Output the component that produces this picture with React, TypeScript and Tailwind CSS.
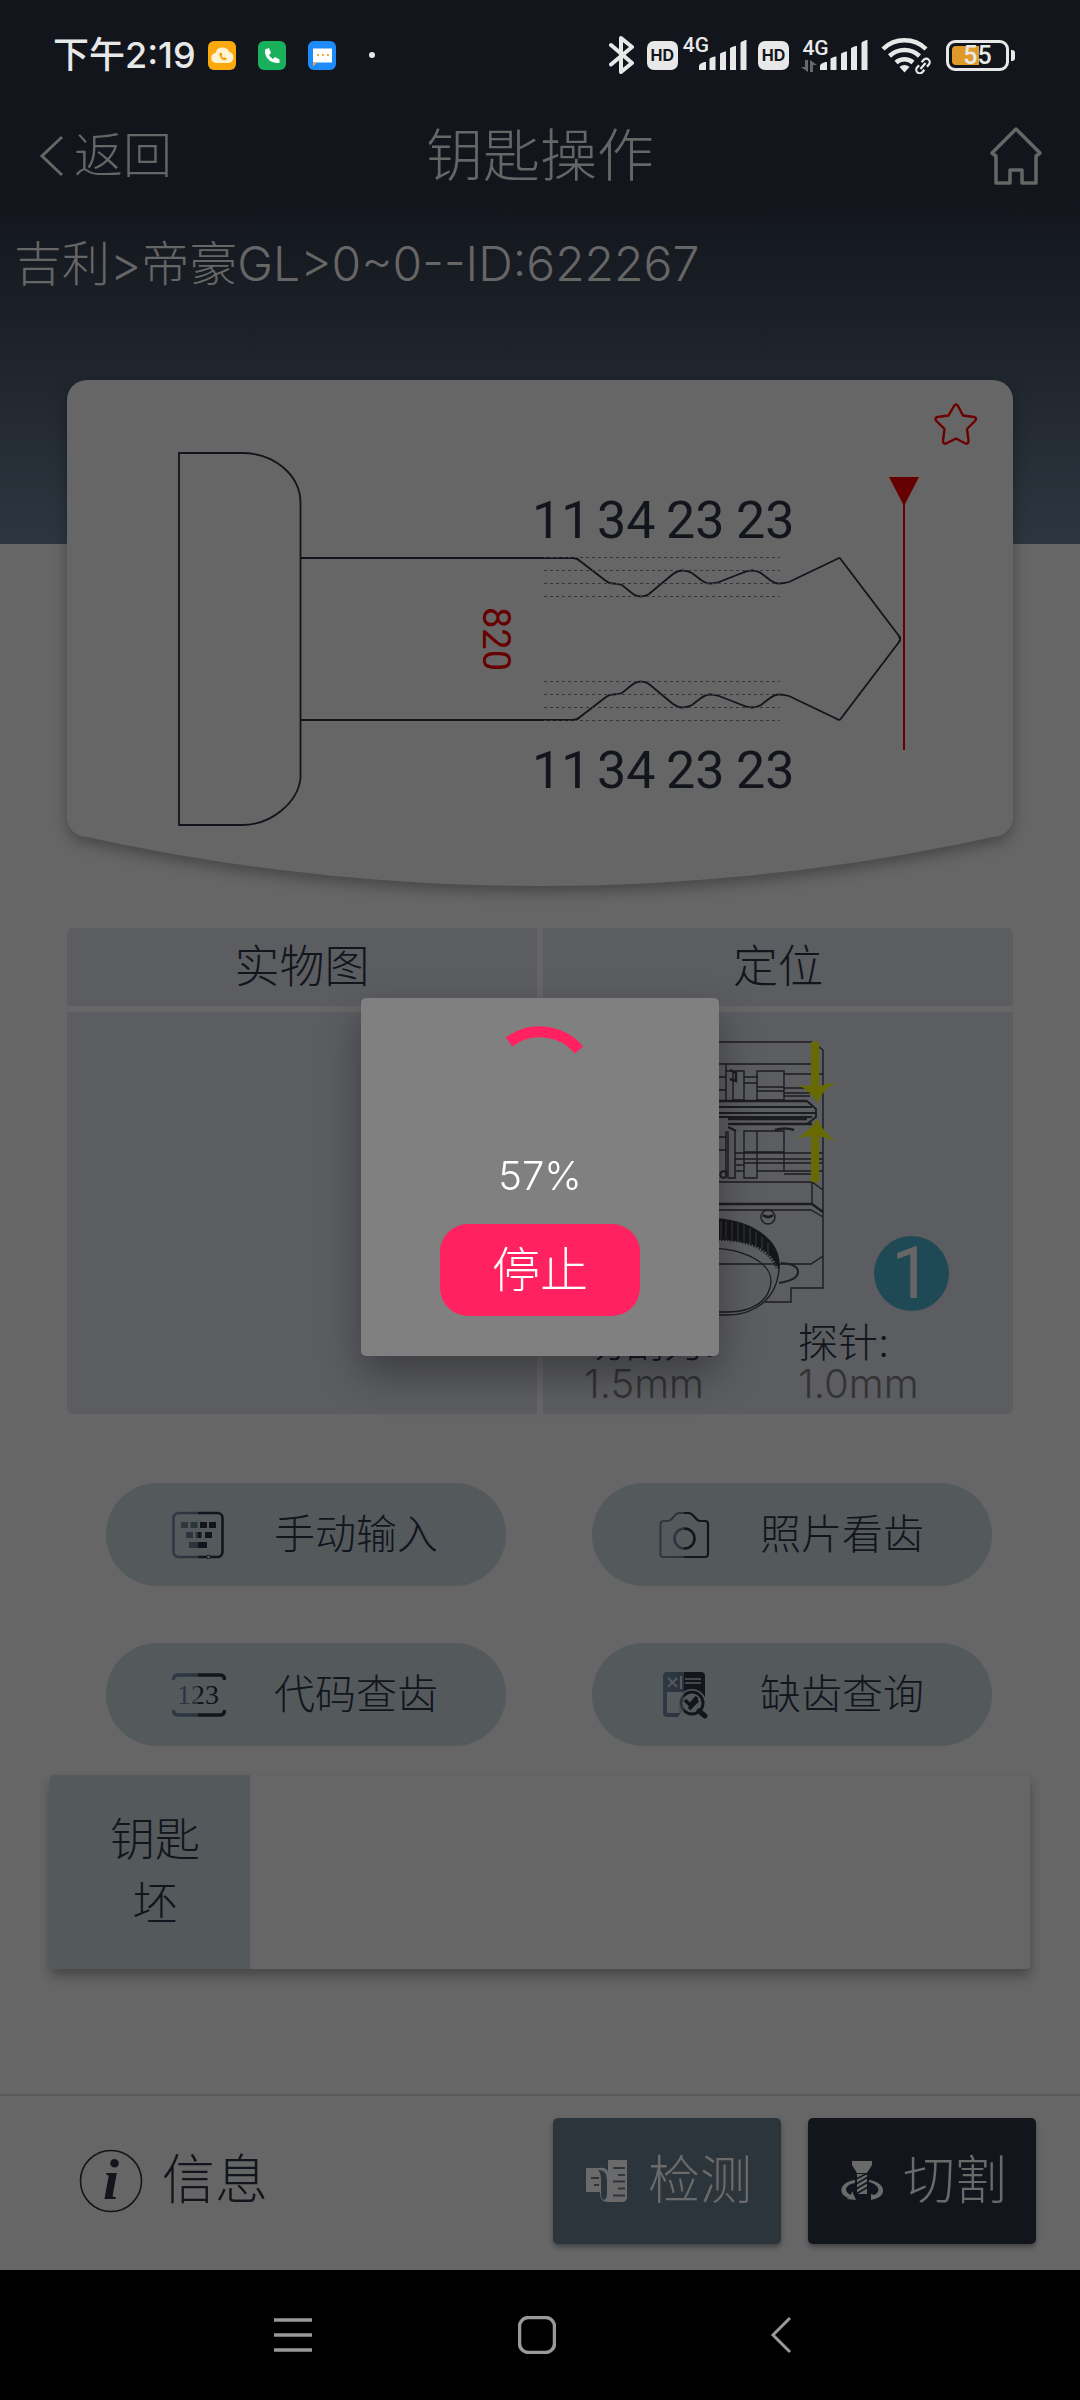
import type { ReactNode } from 'react';

const teethCodes = [
  { x: 532, code: '11' },
  { x: 597, code: '34' },
  { x: 666, code: '23' },
  { x: 736, code: '23' },
];

function ToothCodes({ baseline }: { baseline: number }) {
  return (
    <text y={baseline} fontSize="52" fill="#12151c" className="font-['Roboto',sans-serif] font-normal">
      {teethCodes.map((t) => (
        <tspan key={t.x} x={t.x}>
          {t.code}{' '}
        </tspan>
      ))}
    </text>
  );
}

function SignalBars() {
  return (
    <svg width="48" height="30" viewBox="0 0 48 30" fill="#e8e8e8" aria-hidden="true">
      <path d="M0 26c0-2 4-4 7-4v8H0z" />
      <path d="M10.500 19c0-1 4-2.500 6-2.500V30h-6z" />
      <path d="M21 14c0-1 4-2.500 6-2.500V30h-6z" />
      <path d="M31 8.500c0-1 4-2.500 6-2.500V30h-6z" />
      <path d="M41.500 3c0-1 4-3 6-3v30h-6z" />
    </svg>
  );
}

function HdBadge() {
  return (
    <span className="flex h-[29px] w-[31px] items-center justify-center rounded-[7px] bg-[#e8e8e8] font-['Inter',sans-serif] text-[16px] font-bold leading-none text-[#12151c]">
      HD
    </span>
  );
}

function StatusBar() {
  return (
    <div className="flex h-[110px] items-center justify-between pl-[53px] pr-[65px] text-[#e8e8e8]">
      <div className="flex items-center">
        <span className="w-[155px] whitespace-nowrap font-['Inter','Noto_Sans_CJK_SC',sans-serif] text-[36px] font-medium leading-none">
          下午2:19
        </span>
        <svg width="28" height="29" viewBox="0 0 28 29" aria-hidden="true">
          <rect width="28" height="29" rx="6" fill="#fba90c" />
          <path d="M8 22a5 5 0 0 1-.6-9.900 7.400 7.400 0 0 1 14-1A5.600 5.600 0 0 1 20.500 22z" fill="#fff3d6" />
          <path d="M11.500 12l2-.6 1 2.600-1 1.200a5 5 0 0 0 2.200 1.800l1.200-.8 2.100 1.400c-.4 1.600-1.800 2-3.400 1.500-2.600-.9-4.500-3.700-4.100-7.100z" fill="#f59e0b" />
        </svg>
        <svg className="ml-[22px]" width="28" height="29" viewBox="0 0 28 29" aria-hidden="true">
          <rect width="28" height="29" rx="6" fill="#19b05c" />
          <path d="M7 8.500l4-1.500 2 5-2 2a10 10 0 0 0 4 4l2-2 4.500 2.500v3.500c-8 1-15.500-5-14.500-13.500z" fill="#fff" />
        </svg>
        <svg className="ml-[22px]" width="28" height="29" viewBox="0 0 28 29" aria-hidden="true">
          <rect width="28" height="29" rx="6" fill="#1e8bfa" />
          <path d="M5 7.500h19v14H5z" fill="#fff" />
          <path d="M5 21.500h4L5 25.500z" fill="#f0a93c" />
          <path d="M9 14h2m3 0h2m3 0h2" stroke="#f0a93c" strokeWidth="2" />
        </svg>
        <span className="ml-[33px] size-[6px] rounded-full bg-[#e8e8e8]" />
      </div>
      <div className="flex items-center">
        <svg width="26" height="40" viewBox="0 0 26 40" fill="none" stroke="#e8e8e8" strokeWidth="4" strokeLinejoin="round" strokeLinecap="round" aria-hidden="true">
          <path d="M2 10l21 18-11 9V3l11 9L2 29.500" />
        </svg>
        <span className="ml-[12px]">
          <HdBadge />
        </span>
        <span className="ml-[5px] self-start font-['Roboto',sans-serif] text-[21px] font-medium leading-none">4G</span>
        <span className="-ml-[10px]">
          <SignalBars />
        </span>
        <span className="ml-[11px]">
          <HdBadge />
        </span>
        <span className="ml-[12px] flex flex-col items-center">
          <span className="font-['Roboto',sans-serif] text-[21px] font-medium leading-none">4G</span>
          <svg width="16" height="14" viewBox="0 0 16 14" fill="#666a6e" className="mr-[13px]" aria-hidden="true">
            <path d="M4 1h3v12L0 8h4zM9 1l7 5h-4v7H9z" />
          </svg>
        </span>
        <span className="-ml-[10px]">
          <SignalBars />
        </span>
        <svg className="ml-[13px]" width="52" height="38" viewBox="0 0 52 38" fill="none" stroke="#e8e8e8" aria-hidden="true">
          <path d="M2 13a31 31 0 0 1 43 0M8.500 20a22 22 0 0 1 30 0M15 26.500a13 13 0 0 1 17 0" strokeWidth="4.500" />
          <path d="M18.500 31a7 7 0 0 1 10 0l-5 5.500z" fill="#e8e8e8" stroke="none" />
          <g strokeWidth="2.200" transform="translate(42 30) rotate(-50)">
            <path d="M-2-3.500h-3a3.500 3.500 0 0 0 0 7h3m4-7h3a3.500 3.500 0 0 1 0 7H2M-4 0h8" />
          </g>
        </svg>
        <div className="relative ml-[13px] flex h-[31px] w-[63px] items-center justify-center rounded-[9px] border-[3px] border-[#e8e8e8]">
          <span className="absolute left-[3px] h-[19px] w-[27px] rounded-l-[4px] bg-[#e09a28]" />
          <span className="relative font-['Roboto',sans-serif] text-[25px] font-medium leading-none">55</span>
        </div>
        <span className="ml-[2px] h-[11px] w-[4px] rounded-r-[3px] bg-[#e8e8e8]" />
      </div>
    </div>
  );
}

function KeyDrawing() {
  const upper =
    'M301 558H573Q577 558 580 561L606 581Q609 583.500 613 583.500T622 585L633 594Q637 596.500 641 596.500T649 594L673 574Q678 570.500 682.500 570.500T692 573L701 580Q706 583.500 710 583.500T719 582L742 573Q747 570.500 752 570.500T761 573L770 580Q775 583.500 779 583.500T789 582L837 559Q839.500 557 841 559.500L899 636Q901 639 899 642';
  return (
    <svg viewBox="67 380 946 506" className="relative block w-full" role="img" aria-label="钥匙齿形图">
      <g fill="none" stroke="#12151c" strokeWidth="1.800">
        <path d="M179 453H242C274 453 300.500 475 300.500 503V778C298 802 272 825 242 825H179Z" />
        <path d={upper} />
        <path d={upper} transform="matrix(1 0 0 -1 0 1278)" />
      </g>
      <path
        d="M544 557.500H780M544 570.500H780M544 583.500H780M544 596.500H780M544 681.500H780M544 694.500H780M544 707.500H780M544 720.500H780"
        stroke="#34363a"
        strokeWidth="1"
        strokeDasharray="3 3"
      />
      <ToothCodes baseline={538} />
      <ToothCodes baseline={788} />
      <text transform="translate(483 607) rotate(90)" fontSize="38" fill="#660000" className="font-['Roboto',sans-serif] font-normal">
        820
      </text>
      <path d="M904 500V750" stroke="#660000" strokeWidth="2" />
      <path d="M889 477h30l-15 29z" fill="#660000" />
    </svg>
  );
}

function ClampDrawing() {
  return (
    <svg width="280" height="286" viewBox="560 1036 280 286" fill="none" stroke="#1c1d20" strokeWidth="1.400" role="img" aria-label="夹具定位图">
      <path d="M600 1042H812L823 1050V1288H791V1302H765M600 1064H812M600 1182H812L823 1190M812 1182V1204M600 1210H811L823 1217M600 1264H811L823 1256" />
      <path d="M600 1204H812L823 1212" strokeWidth="2.400" />
      <path d="M726 1064V1100M726 1131V1175M733 1071V1100H744V1071H726M744 1077H758M757 1071h27v29h-27zM744 1083H757M757 1087H784M757 1091H784M700 1077H726M700 1090H726M784 1074H823M784 1088H810M784 1093H810M784 1096H810" />
      <path d="M728 1131v47h7v-47M744 1131v47h13v-47zM757 1131h27v40h-27zM700 1137H726M700 1150H726M735 1159H744M735 1165H744M744 1152H784M735 1153H823M744 1159H823M744 1163H823M784 1171H823M757 1171H784M784 1174H812M735 1171H744" />
      <path d="M600 1101H807L816 1109V1117L807 1124H728M600 1107H812M600 1113H816M600 1117H812" strokeWidth="1.800" />
      <path d="M600 1101H807M728 1119H807M730 1124H812M730 1070l6 3v8l-6-2M728 1127l8 4M775 1130q10-3 19 0" strokeWidth="2.400" />
      <circle cx="723.500" cy="1174.500" r="3.300" strokeWidth="2" />
      <circle cx="768" cy="1217" r="7" />
      <path d="M763 1215q5 4 10 0" strokeWidth="2.800" />
      <path d="M781 1263q17 1 17 9t-19 11" strokeWidth="2" />
      <path d="M700 1219C750 1216 782 1240 779 1270C776 1300 754 1315 727 1315H700" />
      <path d="M700 1249C740 1245 771 1262 771 1281C770 1300 754 1312 727 1312H700" />
      <path d="M700 1219C750 1216 782 1240 779 1270C772 1250 752 1237 700 1240Z" fill="#141517" stroke="none" />
      <path d="M721 1221v18M726 1221v18M732 1222v18M738 1223v18M744 1225v16M750 1228v16M756 1232v15M762 1237v14M768 1243v13" stroke="#3b3c40" strokeWidth="1" />
      <path d="M700 1239.500C745 1237 768 1247 777 1268" strokeWidth="3" strokeDasharray="1.500 1.500" />
      <g fill="#666a00" stroke="none">
        <path d="M811 1042h8v44l17-4q-12 7-19 21q-8-14-20-18l14 1z" />
        <path d="M811 1182h8v-46l17 5q-12-8-19-22q-8 13-20 19l14-2z" />
      </g>
    </svg>
  );
}

function TwoToneGradient({ id }: { id: string }) {
  return (
    <defs>
      <linearGradient id={id} gradientUnits="userSpaceOnUse" x1="0" y1="0" x2="52" y2="0">
        <stop offset="0" stopColor="#2f3a44" />
        <stop offset="0.490" stopColor="#2b333d" />
        <stop offset="0.510" stopColor="#12151c" />
        <stop offset="1" stopColor="#12151c" />
      </linearGradient>
    </defs>
  );
}

function KeypadIcon() {
  return (
    <svg width="52" height="48" viewBox="0 0 52 48" aria-hidden="true">
      <TwoToneGradient id="keypad-tone" />
      <rect x="1.500" y="2" width="49" height="44" rx="5" fill="none" stroke="url(#keypad-tone)" strokeWidth="2.600" />
      <path d="M9 11h7v6H9zM18.500 11h7v6h-7zM28 11h7v6h-7zM37 11h7v6h-7zM14 21h7v6h-7zM23.500 21h6v6h-6zM33 21h7v6h-7zM17 31h18v6H17z" fill="url(#keypad-tone)" />
      <circle cx="36.500" cy="46" r="2" fill="#54595c" stroke="#12151c" />
    </svg>
  );
}

function CameraIcon() {
  return (
    <svg width="52" height="48" viewBox="0 0 52 48" fill="none" stroke="url(#camera-tone)" aria-hidden="true">
      <TwoToneGradient id="camera-tone" />
      <path d="M5 46Q2.500 46 2.500 43V13Q2.500 10 6 10H10C15 10 15 3 21 2H31C37 3 37 10 42 10H47Q50 10 50 13V43Q50 46 47 46Z" strokeWidth="2.200" />
      <circle cx="26.500" cy="27.500" r="10" strokeWidth="2.600" />
    </svg>
  );
}

function CodeIcon() {
  return (
    <svg width="54" height="48" viewBox="0 0 54 48" aria-hidden="true">
      <TwoToneGradient id="code-tone" />
      <path d="M1.500 9Q1.500 4 6 4H48Q52.500 4 52.500 9M1.500 39Q1.500 44 6 44H48Q52.500 44 52.500 39" fill="none" stroke="url(#code-tone)" strokeWidth="3.400" />
      <text x="5" y="33" fontSize="28" fill="url(#code-tone)" className="font-['Liberation_Serif',serif] font-normal">
        123
      </text>
    </svg>
  );
}

function InspectIcon() {
  return (
    <svg width="52" height="48" viewBox="0 0 52 48" aria-hidden="true">
      <TwoToneGradient id="inspect-tone" />
      <path d="M5 5Q5 1 9 1H43Q47 1 47 5V28H30L20 46H9Q5 46 5 42Z" fill="url(#inspect-tone)" />
      <path d="M9 21H24V25L20 33L22 42H9ZM27 18H47V30H27Z" fill="#54595c" />
      <path d="M27 16H47V26H44L40 20H27z" fill="#12151c" />
      <path d="M10 7l9 9m0-9l-9 9M23 5v13" stroke="#54595c" strokeWidth="2" />
      <path d="M27 8H43M27 12H43" stroke="#54595c" strokeWidth="1.400" />
      <circle cx="34" cy="32" r="14" fill="#54595c" />
      <circle cx="34" cy="32" r="11" fill="none" stroke="url(#inspect-tone)" strokeWidth="3" />
      <path d="M41 40l6 5" stroke="#12151c" strokeWidth="5" strokeLinecap="round" />
      <path d="M27 29l5 5 7-8M31 38l9-9" stroke="#12151c" strokeWidth="3.500" fill="none" />
    </svg>
  );
}

function PillButton({ icon, label }: { icon: ReactNode; label: string }) {
  return (
    <button
      type="button"
      className="flex h-[103px] max-w-[400px] flex-1 items-center rounded-full bg-[#54595c] pl-[66px] text-[#12151c]"
    >
      <span className="w-[102px]">{icon}</span>
      <span className="whitespace-nowrap text-[41px] leading-none">{label}</span>
    </button>
  );
}

function ActionButton({ icon, label, className }: { icon: ReactNode; label: string; className: string }) {
  return (
    <button
      type="button"
      className={`flex h-[126px] w-[228px] items-center justify-center gap-5 rounded-[5px] pl-1 text-[52px] leading-none text-[#6a6a6a] shadow-[0_3px_5px_rgba(0,0,0,0.35)] ${className}`}
    >
      {icon}
      {label}
    </button>
  );
}

function ProgressDialog() {
  return (
    <div className="fixed inset-0 flex items-center justify-center pb-[46px]">
      <div
        role="dialog"
        aria-label="进度"
        className="flex h-[358px] w-[358px] flex-col items-center rounded-[5px] bg-[#808080] pt-[28px] text-white shadow-[0_18px_40px_rgba(0,0,0,0.35)]"
      >
        <svg width="114" height="114" viewBox="0 0 114 114" fill="none" aria-hidden="true">
          <path d="M26 16A51.500 51.500 0 0 1 96 24" stroke="#ff2160" strokeWidth="11" />
        </svg>
        <p className="mt-[12px] text-[40px] leading-[48px]">57%</p>
        <button
          type="button"
          className="mt-[24px] h-[92px] w-[200px] rounded-[28px] bg-[#ff2160] text-[48px] leading-none"
        >
          停止
        </button>
      </div>
    </div>
  );
}

export default function App() {
  return (
    <div className="flex min-h-screen flex-col bg-[#666666] font-['Inter','Noto_Sans_CJK_SC',sans-serif] font-light">
      <header className="h-[544px] bg-[linear-gradient(to_bottom,#12151c_200px,#2d363f_544px)] text-[#666666]">
        <StatusBar />
        <div className="grid grid-cols-3 items-center px-[38px] pt-[14px]">
          <button type="button" className="flex items-center gap-[10px] text-[49px] leading-[64px]">
            <svg width="26" height="42" viewBox="0 0 26 42" fill="none" stroke="#666666" strokeWidth="3" aria-hidden="true">
              <path d="M24 2L4 21l20 19" />
            </svg>
            返回
          </button>
          <h1 className="text-center text-[57px] leading-[64px]">钥匙操作</h1>
          <button type="button" aria-label="主页" className="justify-self-end">
            <svg width="52" height="60" viewBox="0 0 52 60" fill="none" stroke="#666666" strokeWidth="3.500" strokeLinejoin="round" aria-hidden="true">
              <path d="M26 3L2 27l4 3V57H20V44H32V57H46V30l4-3z" />
            </svg>
          </button>
        </div>
        <p className="px-[14px] pt-[44px] text-[48px] leading-[64px]">吉利&gt;帝豪GL&gt;0~0--ID:622267</p>
      </header>

      <main className="flex-1">
        <section className="relative mx-[67px] -mt-[164px]">
          <div className="absolute inset-0 flex flex-col drop-shadow-[0_6px_7px_rgba(0,0,0,0.3)]">
            <div className="flex-1 rounded-[20px] bg-[#666666]" />
            <div className="mx-[18px] -mt-px h-[50px] bg-[#666666] [clip-path:ellipse(236%_4350%_at_50%_-4250%)]" />
          </div>
          <KeyDrawing />
          <button type="button" aria-label="收藏" className="absolute right-[35px] top-[22px]">
            <svg width="44" height="44" viewBox="0 0 44 44" fill="none" stroke="#6b0000" strokeWidth="2.400" strokeLinejoin="round" aria-hidden="true">
              <path d="M20 4q2-3 4 0l5 9.500 11 1.500q3.500 1 1 4l-8 8 1.500 11.500q0 4-3 3L22 36.500 12 41.500q-3 1-3-3L10.500 27l-8-8q-2.500-3 1-4L14.500 13.500z" />
            </svg>
          </button>
        </section>

        <section className="mx-[67px] mt-[42px] grid grid-cols-2 gap-[6px] text-[#12151c]">
          <h2 className="rounded-tl-[6px] bg-[#5c5d61] text-center text-[45px] leading-[78px]">实物图</h2>
          <h2 className="rounded-tr-[6px] bg-[#5c5d61] text-center text-[45px] leading-[78px]">定位</h2>
          <div className="rounded-bl-[6px] bg-[#5c5d61]" />
          <div className="h-[402px] rounded-br-[6px] bg-[#5c5d61] pl-[17px] pt-[24px]">
            <div className="flex items-end gap-[34px]">
              <ClampDrawing />
              <span className="mb-[11px] flex size-[75px] items-center justify-center rounded-full bg-[#1f4a55] font-['Roboto',sans-serif] text-[72px] font-normal leading-none text-[#666666]">
                1
              </span>
            </div>
            <dl className="flex pl-[24px] text-[40px] leading-[41px]">
              <div className="w-[214px]">
                <dt>切割刀:</dt>
                <dd className="text-[#333333]">1.5mm</dd>
              </div>
              <div>
                <dt>探针:</dt>
                <dd className="text-[#333333]">1.0mm</dd>
              </div>
            </dl>
          </div>
        </section>

        <section className="mt-[69px] flex flex-col gap-[57px] pl-[106px] pr-[88px]">
          <div className="flex justify-between gap-[86px]">
            <PillButton icon={<KeypadIcon />} label="手动输入" />
            <PillButton icon={<CameraIcon />} label="照片看齿" />
          </div>
          <div className="flex justify-between gap-[86px]">
            <PillButton icon={<CodeIcon />} label="代码查齿" />
            <PillButton icon={<InspectIcon />} label="缺齿查询" />
          </div>
        </section>

        <section className="mx-[50px] mt-[29px] flex h-[194px] overflow-hidden rounded-[4px] bg-[#666666] shadow-[0_7px_12px_rgba(0,0,0,0.3)]">
          <h2 className="flex w-[200px] items-center justify-center bg-[#54595c] pl-[60px] pr-[50px] text-center text-[45px] leading-[64px] text-[#12151c]">
            钥匙坯
          </h2>
        </section>
      </main>

      <footer className="flex h-[176px] items-center justify-between border-t-2 border-[#595959] pb-[5px] pl-[79px] pr-[44px]">
        <button type="button" className="flex items-center gap-[19px] text-[53px] leading-none text-[#12151c]">
          <svg width="64" height="64" viewBox="0 0 64 64" className="overflow-visible" aria-hidden="true">
            <circle cx="32" cy="32" r="30.500" fill="none" stroke="#12151c" strokeWidth="1.600" />
            <text x="32" y="50" textAnchor="middle" fontSize="58" fill="#12151c" className="font-['Liberation_Serif',serif] font-bold italic">
              i
            </text>
          </svg>
          信息
        </button>
        <div className="flex gap-[27px]">
          <ActionButton
            className="bg-[#2d353c]"
            label="检测"
            icon={
              <svg width="42" height="44" viewBox="0 0 42 44" aria-hidden="true">
                <path d="M0 9H12Q22 8 22 14V1H41V38Q41 43 36 43H22Q14 43 14 34V33H0Z" fill="#6a6a6a" />
                <path d="M12 11Q21 10 21 22V34Q21 40 18 41Q15 40 15 34V22Q15 13 12 11Z" fill="#2d353c" />
                <path d="M5 19H13M8 26H13M27 9H39M32 16H39M27 22.500H39M32 29.500H39M27 36.500H39" stroke="#2d353c" strokeWidth="2.200" />
              </svg>
            }
          />
          <ActionButton
            className="bg-[#12151c]"
            label="切割"
            icon={
              <svg width="42" height="44" viewBox="0 0 42 44" fill="#6a6a6a" aria-hidden="true">
                <path d="M11 2H31V6L26 14H16L11 6ZM16 15H26V35H16Z" />
                <path d="M15 20L27 14M15 25L27 18M15 30L27 23M15 35L27 28" stroke="#12151c" strokeWidth="1.500" />
                <path d="M14 21C-2 23-4 36 8 39L5 40 15 41 11 32 10 36C2 32 4 26 14 24Z" />
                <path d="M28 21C44 23 47 36 34 40L30 41V35L33 36C40 33 39 26 28 23Z" />
              </svg>
            }
          />
        </div>
      </footer>

      <nav aria-label="系统导航" className="grid h-[130px] grid-cols-3 items-center justify-items-center bg-black pb-px pl-[171px] pr-[177px]">
        <button type="button" aria-label="最近任务">
          <svg width="38" height="38" viewBox="0 0 38 38" stroke="#999999" strokeWidth="3.500" aria-hidden="true">
            <path d="M0 4H38M0 19H38M0 34H38" />
          </svg>
        </button>
        <button type="button" aria-label="主屏幕">
          <svg width="38" height="38" viewBox="0 0 38 38" fill="none" stroke="#999999" strokeWidth="3.500" aria-hidden="true">
            <rect x="1.500" y="1.500" width="35" height="35" rx="9" />
          </svg>
        </button>
        <button type="button" aria-label="返回上一页">
          <svg width="22" height="38" viewBox="0 0 22 38" fill="none" stroke="#999999" strokeWidth="3" aria-hidden="true">
            <path d="M20 2L3 19l17 17" />
          </svg>
        </button>
      </nav>

      <ProgressDialog />
    </div>
  );
}
